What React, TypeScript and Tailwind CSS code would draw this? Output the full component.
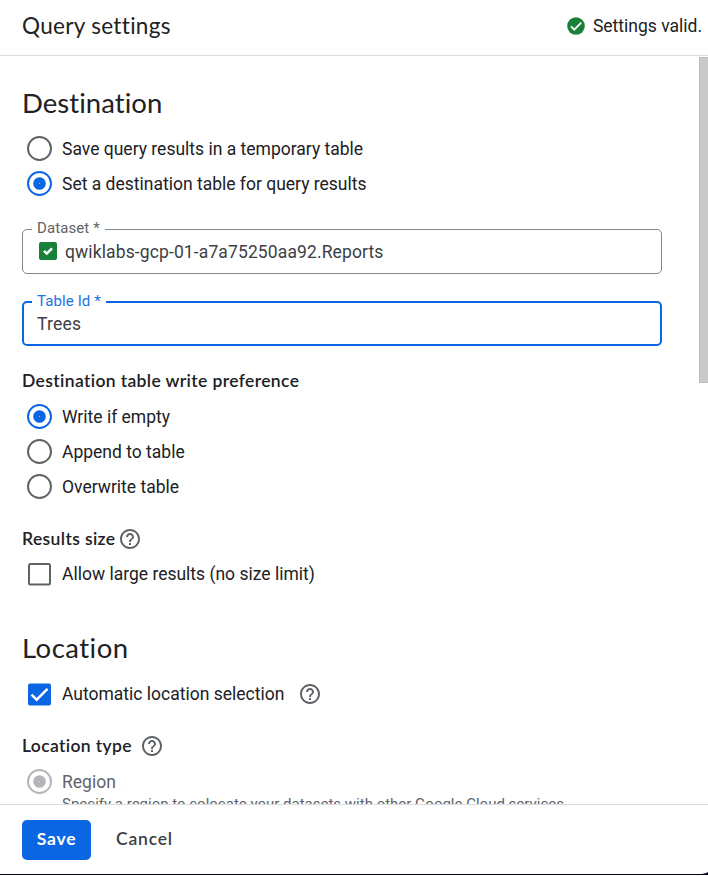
import type { ReactNode } from "react";

function Radio({ label, checked = false, disabled = false }: { label: string; checked?: boolean; disabled?: boolean }) {
  const color = disabled ? "#b3b5b8" : checked ? "#0b66e4" : "#5f6368";
  return (
    <label className="flex h-[35px] shrink-0 items-center pl-[5px]">
      <svg width="25" height="25" viewBox="0 0 25 25" fill="none">
        <circle cx="12.5" cy="12.5" r="11.5" stroke={color} strokeWidth="2" />
        {checked && <circle cx="12.5" cy="12.5" r="6.3" fill={color} />}
        {checked && <circle cx="12.5" cy="12.5" r="0.5" fill="#ffffff" fillOpacity="0.7" />}
      </svg>
      <span className={disabled ? "ml-[10px] pt-[2px] text-[#5f6368]" : "ml-[10px] pt-[2px]"}>{label}</span>
    </label>
  );
}

function Help() {
  return (
    <svg width="22" height="22" viewBox="1 1 22 22" fill="#5f6368">
      <path d="M11 18h2v-2h-2v2zm1-16C6.48 2 2 6.48 2 12s4.48 10 10 10 10-4.48 10-10S17.52 2 12 2zm0 18c-4.41 0-8-3.59-8-8s3.59-8 8-8 8 3.59 8 8-3.59 8-8 8zm0-14c-2.21 0-4 1.79-4 4h2c0-1.1.9-2 2-2s2 .9 2 2c0 2-3 1.75-3 5h2c0-2.25 3-2.5 3-5 0-2.21-1.79-4-4-4z" />
    </svg>
  );
}

function Checkbox({ label, checked = false }: { label: string; checked?: boolean }) {
  return (
    <label className="flex items-center pl-[6px]">
      <svg width="23" height="23" viewBox="0 0 23 23" fill="none">
        {checked ? (
          <>
            <rect y="0.5" width="23" height="22" rx="2" fill="#0b66e4" />
            <path d="M3.5 11.7 8.7 16.7 19.5 5.8" stroke="white" strokeWidth="2.4" />
          </>
        ) : (
          <rect x="1" y="1" width="21" height="20.4" rx="1.5" stroke="#5f6368" strokeWidth="2" />
        )}
      </svg>
      <span className="ml-[11px]">{label}</span>
    </label>
  );
}

function Subheading({ children }: { children: ReactNode }) {
  return <h3 className="font-['Lato',sans-serif] text-[17.5px] font-semibold leading-6 tracking-[0.37px]">{children}</h3>;
}

export default function App() {
  return (
    <div className="flex h-[876px] w-[708px] flex-col overflow-hidden bg-white font-['Roboto',sans-serif] text-[17.5px] text-[#202124]">
      <header className="flex h-14 shrink-0 items-center justify-between border-b border-[#dadce0] pb-[4px] pl-[22px] pr-[6px]">
        <h1 className="font-['Lato',sans-serif] text-[22.5px] leading-7 tracking-[0.32px] [font-variant-ligatures:none]">Query settings</h1>
        <div className="flex items-center">
          <svg width="18" height="18" viewBox="0 0 18 18" fill="none">
            <circle cx="9" cy="9" r="8.8" fill="#188038" />
            <path d="m4 9.3 3.3 3.3 6.9-7" stroke="white" strokeWidth="1.8" />
          </svg>
          <span className="ml-[8px] pt-[2px]">Settings valid.</span>
        </div>
      </header>
      <div className="flex h-[748px] shrink-0 overflow-hidden">
        <main className="flex w-[662px] flex-col pl-[22px]">
          <h2 className="mt-[30px] h-[45px] shrink-0 font-['Lato',sans-serif] text-[27.5px] leading-[34px] tracking-[0.05px] [font-variant-ligatures:none]">Destination</h2>
          <Radio label="Save query results in a temporary table" />
          <Radio label="Set a destination table for query results" checked />
          <div className="relative mt-[28px] flex h-[45px] shrink-0 items-center rounded-[5px] border border-[#80868b] pl-[16px] text-[#3c4043]">
            <span className="absolute -top-[12px] left-[9px] bg-white px-[5px] text-[15px] leading-5 tracking-[0.1px] text-[#5f6368]">Dataset *</span>
            <svg className="mb-px" width="18" height="18" viewBox="0 0 18 18" fill="none">
              <rect width="18" height="18" rx="2" fill="#188038" />
              <path d="m5 8.8 2.8 2.8 5.2-5.2" stroke="white" strokeWidth="2.5" />
            </svg>
            <span className="ml-[8px] pt-[2px] tracking-[0.12px]">qwiklabs-gcp-01-a7a75250aa92.Reports</span>
          </div>
          <div className="relative mt-[27px] flex h-[45px] shrink-0 items-center rounded-[5px] border-2 border-[#0b66e4] pl-[13px] text-[#3c4043]">
            <span className="absolute -top-[12px] left-[8px] bg-white px-[5px] text-[15px] leading-5 tracking-[0.1px] text-[#1a73e8]">Table Id *</span>
            <span className="pt-[2px] tracking-[0.2px]">Trees</span>
          </div>
          <div className="mt-[23px] h-[30px] shrink-0">
            <Subheading>Destination table write preference</Subheading>
          </div>
          <Radio label="Write if empty" checked />
          <Radio label="Append to table" />
          <Radio label="Overwrite table" />
          <div className="mt-[23px] flex h-6 shrink-0 items-center gap-[4px]">
            <Subheading>Results size</Subheading>
            <Help />
          </div>
          <div className="mt-[10px] h-6 shrink-0">
            <Checkbox label="Allow large results (no size limit)" />
          </div>
          <h2 className="mt-[46px] h-[51px] shrink-0 font-['Lato',sans-serif] text-[27.5px] leading-[34px] tracking-[0.48px] [font-variant-ligatures:none]">Location</h2>
          <div className="flex h-6 shrink-0 items-center gap-[15px]">
            <Checkbox label="Automatic location selection" checked />
            <Help />
          </div>
          <div className="mt-[28px] flex h-6 shrink-0 items-center gap-[9px]">
            <Subheading>Location type</Subheading>
            <Help />
          </div>
          <div className="mt-[6px] shrink-0">
            <Radio label="Region" checked disabled />
          </div>
          <p className="-mt-[5px] shrink-0 pl-[40px] text-[15px] leading-5 text-[#5f6368]">Specify a region to colocate your datasets with other Google Cloud services.</p>
        </main>
        <div className="ml-auto mt-px h-[326px] w-[9px] border border-r-0 border-[#bdbdbd] bg-[#c9c9c9]" />
      </div>
      <footer className="relative flex h-[71px] shrink-0 items-center border-y border-b-[#05051a] border-t-[#dadce0] pl-[22px] font-['Lato',sans-serif] font-semibold tracking-[0.8px]">
        <button className="h-10 w-[69px] rounded-[5px] bg-[#0b66e4] font-bold text-white">Save</button>
        <button className="ml-[25px] text-[#3c4043]">Cancel</button>
        <svg className="absolute -bottom-px right-0" width="9" height="3" viewBox="0 0 9 3" fill="#05051a">
          <path d="M0 2Q6 2 9 0V3H0Z" />
        </svg>
      </footer>
    </div>
  );
}
